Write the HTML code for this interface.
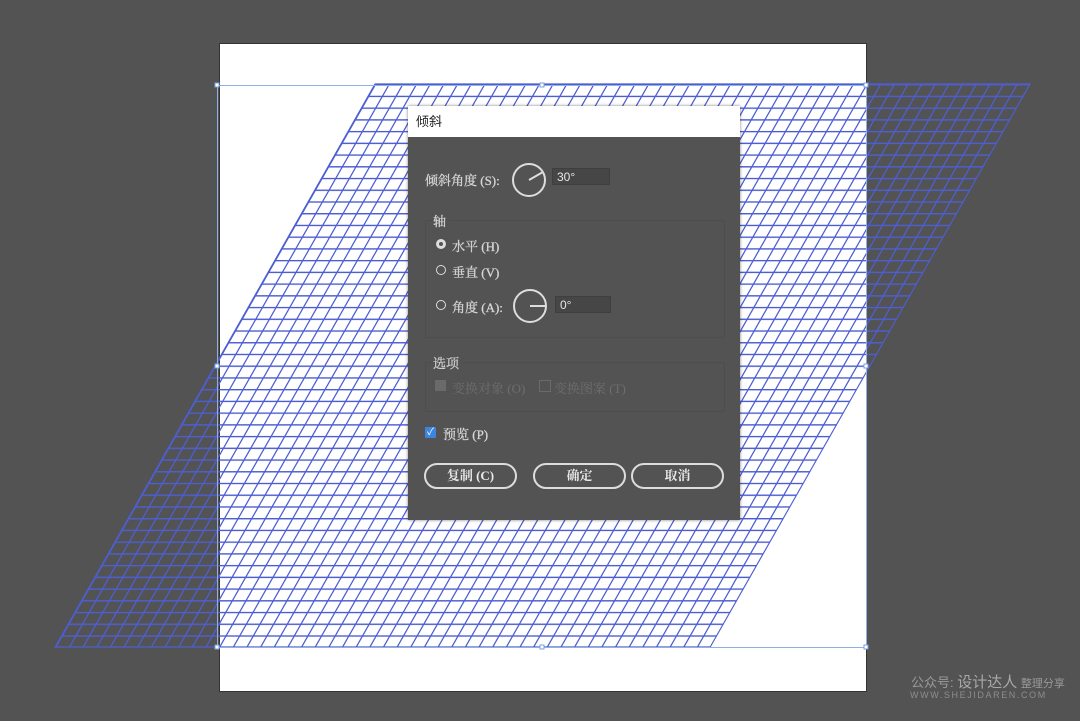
<!DOCTYPE html>
<html><head><meta charset="utf-8"><style>
body{margin:0;width:1080px;height:721px;background:#535353;position:relative;overflow:hidden;font-family:"Liberation Sans","Noto Sans CJK SC",sans-serif;}
.a{position:absolute}
.dlg{left:408px;top:106px;width:332px;height:414px;background:#535353;box-shadow:0 0 3px rgba(0,0,0,.5)}
.title{left:0;top:0;width:332px;height:31px;background:#fff;font-size:13px;color:#222;line-height:31px;padding-left:8px;box-sizing:border-box}
.t{color:#d6d6d6;font-size:13px;font-family:"Liberation Serif","Noto Serif CJK SC",serif;white-space:nowrap;-webkit-text-stroke:0.3px #d6d6d6}
.field{background:#464646;border:1px solid #3f3f3f;color:#e6e6e6;font-size:12px;height:17px;line-height:17px;padding-left:4px;box-sizing:border-box}
.grp{border:1px solid #4d4d4d;border-radius:2px}
.rad{width:10px;height:10px;border:1.5px solid #ddd;border-radius:50%;box-sizing:border-box}
.btn{height:26px;border:2px solid #ddd;border-radius:13px;box-sizing:border-box;color:#e8e8e8;font-size:13px;text-align:center;line-height:22px;font-weight:bold;font-family:"Liberation Serif","Noto Serif CJK SC",serif}
</style></head><body>
<div class="a" style="left:219px;top:43px;width:648px;height:649px;background:#fff;border:1px solid #333;box-sizing:border-box"></div>
<svg class="a" style="left:0;top:0" width="1080" height="721">
<defs>
<pattern id="g" width="13.65" height="11.73" patternUnits="userSpaceOnUse">
<path d="M0 0.7H13.65M0.7 0V11.73" stroke="#4d5ed2" stroke-width="1.5" fill="none"/>
</pattern>
</defs>
<g transform="matrix(1,0,-0.568,1,375,84)">
<rect x="0" y="0" width="655" height="563" fill="url(#g)"/>
<rect x="0" y="0" width="655" height="563" fill="none" stroke="#4d5ed2" stroke-width="1.3"/>
</g>
<rect x="217.5" y="85.5" width="649" height="562" fill="none" stroke="#8fb0e0" stroke-width="1"/>
<g fill="#fff" stroke="#7aa0dc" stroke-width="1">
<rect x="215" y="83" width="4" height="4"/><rect x="540" y="83" width="4" height="4"/><rect x="864" y="83" width="4" height="4"/>
<rect x="215" y="364" width="4" height="4"/><rect x="864" y="364" width="4" height="4"/>
<rect x="215" y="645" width="4" height="4"/><rect x="540" y="645" width="4" height="4"/><rect x="864" y="645" width="4" height="4"/>
</g>
</svg>
<div class="a dlg">
<div class="a title">倾斜</div>
<div class="a t" style="left:17px;top:64px">倾斜角度 (S):</div>
<svg class="a" style="left:103px;top:56px" width="36" height="36"><circle cx="18" cy="18" r="16" fill="none" stroke="#ddd" stroke-width="2"/><line x1="18" y1="18" x2="32" y2="10" stroke="#ddd" stroke-width="2"/></svg>
<div class="a field" style="left:144px;top:62px;width:58px">30°</div>
<div class="a grp" style="left:17px;top:114px;width:298px;height:116px"></div>
<div class="a t" style="left:25px;top:105px;background:#535353;padding-right:3px">轴</div>
<div class="a rad" style="left:28px;top:133px;background:#ddd;border-width:3px;border-color:#ddd"></div>
<div class="a" style="left:31px;top:136px;width:4px;height:4px;border-radius:50%;background:#555"></div>
<div class="a t" style="left:44px;top:130px">水平 (H)</div>
<div class="a rad" style="left:28px;top:159px"></div>
<div class="a t" style="left:44px;top:156px">垂直 (V)</div>
<div class="a rad" style="left:28px;top:194px"></div>
<div class="a t" style="left:44px;top:191px">角度 (A):</div>
<svg class="a" style="left:104px;top:182px" width="36" height="36"><circle cx="18" cy="18" r="16" fill="none" stroke="#ddd" stroke-width="2"/><line x1="18" y1="18" x2="34" y2="18" stroke="#ddd" stroke-width="2"/></svg>
<div class="a field" style="left:147px;top:190px;width:56px">0°</div>
<div class="a grp" style="left:17px;top:256px;width:298px;height:48px"></div>
<div class="a t" style="left:25px;top:247px;background:#535353;padding-right:3px;color:#c8c8c8">选项</div>
<div class="a" style="left:27px;top:274px;width:11px;height:11px;background:#6a6a6a"></div>
<div class="a t" style="left:44px;top:272px;color:#6e6e6e;-webkit-text-stroke:0">变换对象 (O)</div>
<div class="a" style="left:131px;top:274px;width:10px;height:10px;border:1px solid #6a6a6a"></div>
<div class="a t" style="left:146px;top:272px;color:#6e6e6e;-webkit-text-stroke:0">变换图案 (T)</div>
<div class="a" style="left:17px;top:321px;width:11px;height:11px;background:#3d86e0;border-radius:1px;color:#fff;font-size:10px;line-height:11px;text-align:center">✓</div>
<div class="a t" style="left:35px;top:318px">预览 (P)</div>
<div class="a btn" style="left:16px;top:357px;width:93px">复制 (C)</div>
<div class="a btn" style="left:125px;top:357px;width:93px;border-width:2.5px">确定</div>
<div class="a btn" style="left:223px;top:357px;width:93px">取消</div>
</div>
<div class="a" style="left:911px;top:671px;color:#9a9a9a;font-size:13px;white-space:nowrap">公众号: <span style="font-size:15px;color:#a8a8a8">设计达人</span> <span style="font-size:11px">整理分享</span></div>
<div class="a" style="left:910px;top:690px;color:#8e8e8e;font-size:9px;letter-spacing:1.6px">WWW.SHEJIDAREN.COM</div>
</body></html>
